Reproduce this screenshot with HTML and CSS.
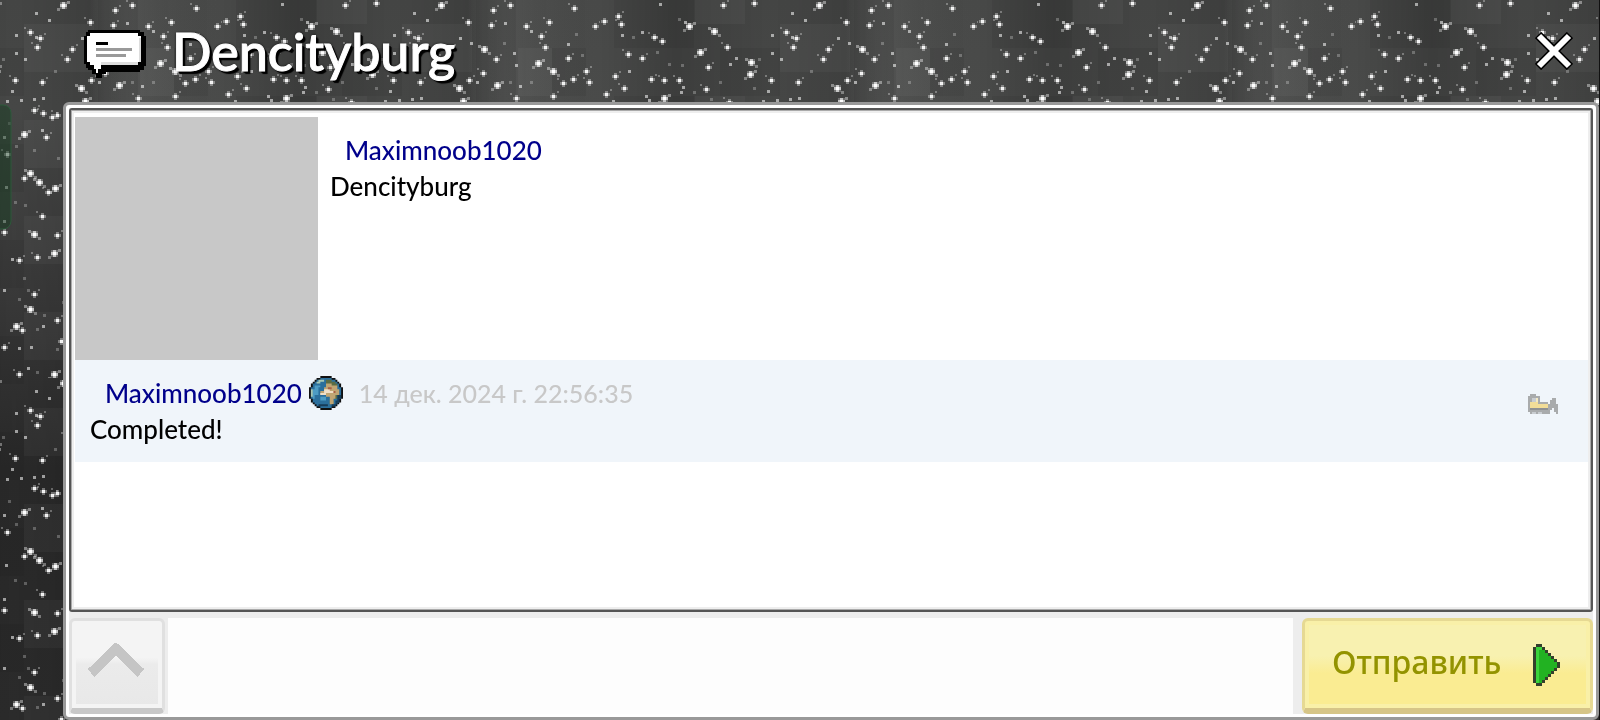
FILE: index.html
```
<!DOCTYPE html>
<html lang="ru">
<head>
<meta charset="UTF-8">
<meta name="viewport" content="width=device-width, initial-scale=1.0">
<title>Dencityburg</title>
<link rel="stylesheet" href="styles.css">
</head>
<body>
<svg class="sky" aria-hidden="true">
    <defs>
        <linearGradient id="shade" x1="0" y1="0" x2="0" y2="1">
            <stop offset="0" stop-color="#484948"/>
            <stop offset="0.15" stop-color="#4a4b4a"/>
            <stop offset="0.4" stop-color="#3c3c3c"/>
            <stop offset="0.65" stop-color="#2b2b2b"/>
            <stop offset="1" stop-color="#2d2d2d"/>
        </linearGradient>
        <linearGradient id="band">
            <stop offset="0" stop-color="#000" stop-opacity="0"/>
            <stop offset="0.2" stop-color="#000" stop-opacity="0.18"/>
            <stop offset="0.45" stop-color="#000" stop-opacity="0.05"/>
            <stop offset="0.65" stop-color="#000" stop-opacity="0.15"/>
            <stop offset="0.8" stop-color="#fff" stop-opacity="0.03"/>
            <stop offset="1" stop-color="#000" stop-opacity="0"/>
        </linearGradient>
        <pattern id="blocks" x="222" width="378" height="96" patternUnits="userSpaceOnUse">
            <rect width="378" height="96" fill="url(#band)"/>
            <path fill="#000" opacity="0.06" d="M14 0h80v48h-80zM254 0h40v96h-40zM120 48h60v48h-60zM330 48h34v48h-34z"/>
            <path fill="#fff" opacity="0.03" d="M95 0h50v24h-50zM180 24h70v48h-70zM296 48h34v48h-34z"/>
        </pattern>
        <pattern id="stars" x="-156" width="378" height="378" patternUnits="userSpaceOnUse">
            <g id="stars-list"></g>
        </pattern>
    </defs>
    <rect width="100%" height="100%" fill="url(#shade)"/>
    <rect width="100%" height="100%" fill="url(#blocks)"/>
    <rect width="100%" height="100%" fill="url(#stars)"/>
    <rect class="side-tab" x="-20" y="105" width="31" height="124" rx="8"/>
</svg>

<div class="dialog">
    <header class="header">
        <svg class="header-icon" width="62" height="48" viewBox="0 0 62 48" aria-hidden="true">
            <path fill="#000" d="M4 0h52v2h4v4h2v30h-2v4h-4v2H22v2h-4v4h-6v-4H8v-4H4v-2H2v-4H0V6h2V2h2z"/>
            <path fill="#fff" d="M6 3h48v3h3v26h-3v3H17v4h-3v4h-2v-4h-2v-4H6v-3H3V6h3z"/>
            <path fill="#ddd" d="M17 32h37v3H17zM55 8h2v24h-2z"/>
            <path fill="#000" d="M12 12h12v3H12z"/>
            <path fill="#999" d="M12 18h36v3H12zM12 24h30v3H12z"/>
        </svg>
        <h1 class="title">Dencityburg</h1>
        <button class="close" type="button" aria-label="Закрыть">
            <svg width="38" height="38" viewBox="0 0 38 38">
                <path d="M3 3l32 32M35 3L3 35" stroke="#000" stroke-width="9"/>
                <path d="M4 4l30 30M34 4L4 34" stroke="#fff" stroke-width="6"/>
            </svg>
        </button>
    </header>

    <main class="panel">
        <div class="list">
            <article class="post">
                <div class="preview"></div>
                <div class="post-text">
                    <a href="#" class="user">Maximnoob1020</a>
                    <p class="text">Dencityburg</p>
                </div>
            </article>
            <article class="comment">
                <div class="comment-body">
                    <div class="comment-head">
                        <a href="#" class="user">Maximnoob1020</a>
                        <svg class="globe" width="34" height="34" viewBox="0 0 18 18" aria-hidden="true">
                            <path fill="#111" d="M6 0h6v1h2v1h1v1h1v1h1v2h1v6h-1v2h-1v1h-1v1h-1v1h-2v1H6v-1H4v-1H3v-1H2v-1H1v-2H0V6h1V4h1V3h1V2h1V1h2z"/>
                            <path fill="#2b6f9c" d="M6 1h6v1h2v1h1v1h1v2h1v6h-1v2h-1v1h-1v1h-2v1H6v-1H4v-1H3v-1H2v-2H1V6h1V4h1V3h1V2h2z"/>
                            <path fill="#4d9cc4" d="M3 5h3v1H5v4H3v2H2V7h1zM6 11h3v2H6z"/>
                            <path fill="#a5c7b5" d="M5 2h3v1H6v1H4V3h1zM1 7h1v4H1z"/>
                            <path fill="#5a6c44" d="M9 2h3v1h2v1h1v2h-3V5H9zM13 10h2v2h-2zM11 13h2v2h-2z"/>
                            <path fill="#c0a573" d="M9 4h3v1h3v2h1v3h-2v2h-1v3h-2v-4H9v-1H6V8h2V6h1z"/>
                            <path fill="#f0dfc8" d="M8 7h3v1h2v1H9v1H6V9h2z"/>
                            <path fill="#a85f45" d="M10 6h2v1h-2zM13 8h1v1h-1z"/>
                            <path fill="#163b57" d="M15 10h2v2h-1v2h-1v1h-1v1h-2v-1h2v-2h1zM5 15h5v1H5z"/>
                        </svg>
                        <time class="date" datetime="2024-12-14T22:56:35">14 дек. 2024 г. 22:56:35</time>
                    </div>
                    <p class="text">Completed!</p>
                </div>
                <button class="remove" type="button" aria-label="Удалить">
                    <svg width="30" height="22" viewBox="0 0 15 11" shape-rendering="crispEdges">
                        <path fill="#a9abac" d="M1 0h3v1h2v3h4v1h1V3h1V2h2v3h1v5h-1v-1h-1V7h-1v1h-1v2H1V9H0V1h1z"/>
                        <path fill="#f2dd98" d="M1 4h4v1h5v2H1z"/>
                        <path fill="#f4e9c1" d="M4 2h1v2H4z"/>
                        <path fill="#c9cdd1" d="M2 2h2v2H2zM2 9h2v1H2zM5 9h2v1H5z"/>
                        <path fill="#8f9193" d="M1 7h9v1H1z"/>
                    </svg>
                </button>
            </article>
        </div>

        <form class="footer">
            <button class="btn btn-up" type="button" aria-label="Развернуть">
                <svg width="58" height="36" viewBox="0 0 58 36" shape-rendering="crispEdges">
                    <path d="M4 31L29 7l25 24" fill="none" stroke="#c5c5c5" stroke-width="10"/>
                </svg>
            </button>
            <textarea class="message" aria-label="Сообщение"></textarea>
            <button class="btn btn-send" type="button">
                <span class="btn-label">Отправить</span>
                <svg width="27" height="42" viewBox="0 0 9 14" shape-rendering="crispEdges">
                    <path fill="#34402c" d="M1 0h2v1h1v1h1v1h1v1h1v1h1v1h1v2H8v1H7v1H6v1H5v1H4v1H3v1H1v-1H0V1h1z"/>
                    <path fill="#22b222" d="M1 1h2v1h1v1h1v1h1v1h1v1h1v2H7v1H6v1H5v1H4v1H3v1H1z"/>
                    <path fill="#3bd43b" d="M1 1h1v12H1zM2 1h1v1H2z"/>
                </svg>
            </button>
        </form>
    </main>
</div>

<script src="stars.js"></script>
</body>
</html>
```
FILE: styles.css
```
* {
    box-sizing: border-box;
}

body {
    margin: 0;
    background-color: #333;
    color: #000;
    font-family: Lato, "Open Sans", sans-serif;
    font-size: 26px;
    line-height: 36px;
}

h1,
p {
    margin: 0;
}

button {
    font: inherit;
    cursor: pointer;
}

svg {
    display: block;
}

/* starry background behind the dialog */
.sky {
    position: fixed;
    top: 0;
    left: 0;
    width: 100%;
    height: 100%;
}

.side-tab {
    fill: rgba(20, 60, 30, 0.45);
    stroke: #2c5a3a;
}

.dialog {
    position: relative;
    display: flex;
    flex-direction: column;
    height: 100vh;
    padding-left: 63px;
    border-right: 1px solid #111;
}

.header {
    display: flex;
    align-items: center;
    height: 102px;
    flex-shrink: 0;
    padding: 0 26px 0 21px;
}

.header-icon {
    margin-top: 6px;
}

.title {
    flex: 1;
    padding-left: 26px;
    color: #fff;
    font-size: 52px;
    font-weight: 500;
    line-height: 72px;
    -webkit-text-stroke: 1px #fff;
    text-shadow: 2px 2px 0 #000, 3px 3px 1px #000, 0 0 3px #000;
}

.close {
    padding: 0;
    border: none;
    background: none;
}

.panel {
    flex: 1;
    display: flex;
    flex-direction: column;
    min-height: 0;
    border: 3px solid #999;
    border-radius: 6px;
    background-color: #ededed;
    box-shadow: inset 0 0 0 3px #fff;
    padding: 3px;
}

.list {
    flex: 1;
    min-height: 0;
    overflow: auto;
    padding: 5px 2px;
    border: 2px solid #555;
    border-radius: 3px;
    background-color: #fff;
    box-shadow: inset 0 0 0 1px #aaa, inset 0 0 0 3px #eee;
}

.post {
    display: flex;
    padding: 2px 0 0 2px;
}

.preview {
    width: 243px;
    height: 243px;
    background-color: #c8c8c8;
}

.post-text {
    padding: 15px 12px;
}

.user {
    margin-left: 15px;
    color: #00008b;
    font-weight: 500;
    text-decoration: none;
}

.text {
    font-weight: 500;
}

.comment {
    display: flex;
    justify-content: space-between;
    height: 102px;
    margin: 0 1px 0 2px;
    padding: 15px 30px 15px 15px;
    background-color: #f0f5fa;
}

.comment-head {
    display: flex;
    align-items: center;
}

.globe {
    margin: 0 16px 0 7px;
}

.date {
    color: #c8c8c8;
    font-size: 25px;
    font-weight: 500;
}

.remove {
    align-self: center;
    padding: 0;
    margin-bottom: 12px;
    border: none;
    background: none;
}

.footer {
    display: flex;
    padding-top: 6px;
    height: 102px;
    flex-shrink: 0;
}

.btn {
    display: flex;
    align-items: center;
    border: 3px solid #e0e0e0;
    border-bottom: 6px solid #c8c8c8;
    border-radius: 6px;
}

.btn-up {
    justify-content: center;
    width: 96px;
    padding: 0 3px 9px 0;
    background: linear-gradient(#f4f4f4 0 42%, #ebebeb 50%, #e8e8e8);
    box-shadow: inset 0 0 0 4px #f4f4f4;
}

.message {
    flex: 1;
    margin: 0 9px 0 3px;
    padding: 12px;
    border: none;
    background-color: #fdfdfd;
    font: inherit;
    resize: none;
}

.btn-send {
    justify-content: space-between;
    width: 291px;
    padding: 0 30px 0 27px;
    border-color: #e6d993;
    border-bottom-color: #d6c587;
    background: linear-gradient(#f8f1b0 0 40%, #faec92 60%);
    box-shadow: inset 0 0 0 4px #f9f0a8;
    color: #939300;
    font-family: "Noto Sans", "Open Sans", sans-serif;
    font-size: 32px;
    font-weight: 500;
}

.btn-label {
    padding-bottom: 6px;
}
```
FILE: stars.js
```
// x, y, size: 0 = dim dot, 1 = dot, 2 = cross, 3 = big cross
// coordinates are inside one 378 x 378 tile
const stars = [
    [3, 20, 2], [17, 15, 2], [20, 23, 2], [21, 34, 1], [59, 3, 1], [122, 4, 2], [153, 2, 2],
    [41, 31, 1], [61, 40, 2], [88, 25, 3], [113, 30, 3], [99, 51, 3], [126, 46, 2], [41, 57, 2],
    [27, 53, 2], [50, 78, 2], [63, 79, 2], [107, 66, 2], [150, 61, 3], [149, 73, 3], [170, 79, 2],
    [197, 81, 2], [185, 31, 2], [195, 37, 2], [192, 46, 2], [227, 48, 2], [222, 58, 2], [218, 4, 3],
    [245, 21, 2], [268, 24, 2], [261, 48, 3], [273, 58, 2], [287, 4, 2], [303, 25, 2], [326, 21, 2],
    [315, 62, 3], [330, 70, 3], [363, 70, 2], [366, 81, 2], [350, 78, 2], [340, 82, 2], [274, 84, 3],
    [236, 87, 3], [240, 100, 3], [322, 46, 2], [318, 35, 2], [345, 43, 1], [63, 97, 3], [23, 87, 2],
    [5, 93, 2], [105, 88, 2], [345, 57, 2], [351, 7, 2], [372, 25, 2], [191, 12, 1], [270, 9, 2],
    [191, 36, 1], [32, 36, 0], [53, 36, 2], [78, 18, 0], [84, 21, 1], [82, 86, 1], [78, 79, 2],
    [14, 75, 2], [28, 70, 1], [135, 57, 1], [129, 63, 1], [158, 58, 0], [180, 58, 1], [171, 34, 1],
    [171, 52, 1], [204, 19, 1], [237, 37, 1], [248, 42, 1], [282, 22, 1], [281, 42, 0], [291, 52, 1],
    [293, 64, 1], [260, 72, 2], [246, 79, 2], [254, 81, 1], [297, 85, 1], [308, 81, 0], [287, 81, 0],
    [293, 97, 2], [330, 95, 2], [167, 90, 1], [176, 99, 1], [162, 100, 1], [198, 97, 1], [128, 101, 2],
    [110, 98, 0], [80, 91, 1], [93, 91, 0], [45, 95, 1], [48, 99, 1], [12, 100, 1], [68, 63, 0],
    [81, 64, 0], [56, 51, 0], [119, 81, 0], [153, 87, 0], [210, 70, 0], [308, 30, 1], [353, 33, 0],
    [359, 54, 0], [189, 98, 1], [189, 109, 2], [198, 112, 2], [207, 116, 2], [212, 114, 2],
    [179, 133, 3], [197, 129, 1], [201, 136, 2], [162, 153, 2], [213, 157, 0], [159, 136, 1],
    [189, 149, 0], [185, 172, 3], [179, 177, 2], [194, 181, 3], [210, 187, 3], [203, 191, 2],
    [161, 186, 1], [197, 215, 2], [159, 220, 1], [189, 233, 3], [212, 234, 2], [159, 231, 2],
    [209, 252, 3], [192, 256, 2], [174, 259, 2], [167, 258, 1], [179, 277, 0], [183, 289, 0],
    [189, 293, 2], [174, 298, 0], [159, 289, 1], [185, 308, 3], [212, 319, 2], [199, 314, 0],
    [171, 325, 3], [177, 329, 2], [198, 325, 1], [192, 328, 0], [216, 340, 2], [170, 201, 0],
    [164, 122, 0], [171, 145, 0], [180, 204, 0], [218, 301, 0], [159, 346, 2], [174, 347, 1],
    [186, 346, 1], [212, 348, 0], [183, 367, 1], [174, 373, 2], [209, 373, 3], [192, 371, 0]
];

const cell = (x, y, w, alpha) =>
    `<rect x="${x}" y="${y}" width="${w}" height="${w}" fill="#fff" fill-opacity="${alpha}"/>`;

let html = '';
stars.forEach(([x, y, size], i) => {
    // every other star gets a stray neighbour on the opposite side
    const side = i % 2 ? 1 : -1;
    if (size === 2) {
        html += cell(x - 2, y, 3, 0.35) + cell(x + 2, y, 3, 0.35) + cell(x, y - 2, 3, 0.35) + cell(x, y + 2, 3, 0.35);
        html += cell(x + 5 * side, y - 4, 2, 0.3);
    }
    if (size === 3) {
        html += cell(x - 2, y - 2, 7, 0.25);
        html += cell(x - 2, y, 3, 0.6) + cell(x + 2, y, 3, 0.6) + cell(x, y - 2, 3, 0.6) + cell(x, y + 2, 3, 0.6);
        html += cell(x + 5 * side, y - 3, 3, 0.4) + cell(x - 5 * side, y + 4, 3, 0.35);
    }
    html += cell(x, y, 3, [0.25, 0.55, 0.9, 1][size]);
});
document.getElementById('stars-list').innerHTML = html;
```
